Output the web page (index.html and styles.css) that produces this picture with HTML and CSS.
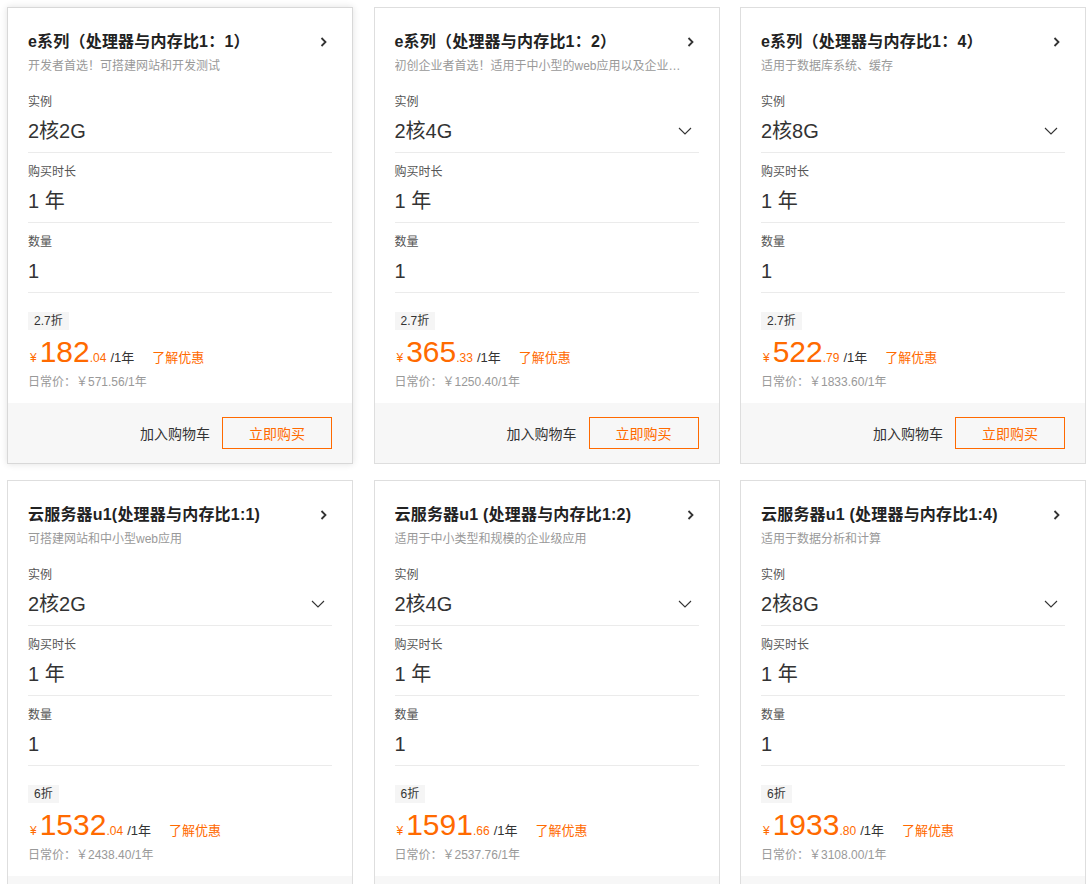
FILE: index.html
```html
<!DOCTYPE html>
<html lang="zh-CN">
<head>
<meta charset="utf-8">
<title>云服务器</title>
<link rel="stylesheet" href="styles.css">
</head>
<body>
<div class="grid">

  <div class="card card-hover">
    <div class="body">
      <div class="title-row"><span class="title">e系列（处理器与内存比1：1）</span><svg class="arrow-r" width="8" height="10" viewBox="0 0 8 10"><polyline points="1.5,1 5.5,5 1.5,9" fill="none" stroke="#333" stroke-width="1.8"/></svg></div>
      <div class="sub">开发者首选！可搭建网站和开发测试</div>
      <div class="field first"><div class="label">实例</div><div class="value"><span>2核2G</span></div></div>
      <div class="field"><div class="label">购买时长</div><div class="value"><span>1 年</span></div></div>
      <div class="field"><div class="label">数量</div><div class="value"><span>1</span></div></div>
      <div class="price-area">
        <div class="badge-row"><span class="badge">2.7折</span></div>
        <div class="price"><span class="yen">¥</span><span class="big">182</span><span class="dec">.04</span><span class="unit">/1年</span><span class="promo">了解优惠</span></div>
        <div class="orig">日常价：￥571.56/1年</div>
      </div>
    </div>
    <div class="footer"><span class="cart">加入购物车</span><span class="buy">立即购买</span></div>
  </div>

  <div class="card">
    <div class="body">
      <div class="title-row"><span class="title">e系列（处理器与内存比1：2）</span><svg class="arrow-r" width="8" height="10" viewBox="0 0 8 10"><polyline points="1.5,1 5.5,5 1.5,9" fill="none" stroke="#333" stroke-width="1.8"/></svg></div>
      <div class="sub narrow">初创企业者首选！适用于中小型的web应用以及企业级应用</div>
      <div class="field first"><div class="label">实例</div><div class="value"><span>2核4G</span><svg class="arrow-d" width="14" height="8" viewBox="0 0 14 8"><polyline points="1,1 7,7 13,1" fill="none" stroke="#333" stroke-width="1.1"/></svg></div></div>
      <div class="field"><div class="label">购买时长</div><div class="value"><span>1 年</span></div></div>
      <div class="field"><div class="label">数量</div><div class="value"><span>1</span></div></div>
      <div class="price-area">
        <div class="badge-row"><span class="badge">2.7折</span></div>
        <div class="price"><span class="yen">¥</span><span class="big">365</span><span class="dec">.33</span><span class="unit">/1年</span><span class="promo">了解优惠</span></div>
        <div class="orig">日常价：￥1250.40/1年</div>
      </div>
    </div>
    <div class="footer"><span class="cart">加入购物车</span><span class="buy">立即购买</span></div>
  </div>

  <div class="card">
    <div class="body">
      <div class="title-row"><span class="title">e系列（处理器与内存比1：4）</span><svg class="arrow-r" width="8" height="10" viewBox="0 0 8 10"><polyline points="1.5,1 5.5,5 1.5,9" fill="none" stroke="#333" stroke-width="1.8"/></svg></div>
      <div class="sub">适用于数据库系统、缓存</div>
      <div class="field first"><div class="label">实例</div><div class="value"><span>2核8G</span><svg class="arrow-d" width="14" height="8" viewBox="0 0 14 8"><polyline points="1,1 7,7 13,1" fill="none" stroke="#333" stroke-width="1.1"/></svg></div></div>
      <div class="field"><div class="label">购买时长</div><div class="value"><span>1 年</span></div></div>
      <div class="field"><div class="label">数量</div><div class="value"><span>1</span></div></div>
      <div class="price-area">
        <div class="badge-row"><span class="badge">2.7折</span></div>
        <div class="price"><span class="yen">¥</span><span class="big">522</span><span class="dec">.79</span><span class="unit">/1年</span><span class="promo">了解优惠</span></div>
        <div class="orig">日常价：￥1833.60/1年</div>
      </div>
    </div>
    <div class="footer"><span class="cart">加入购物车</span><span class="buy">立即购买</span></div>
  </div>

  <div class="card">
    <div class="body">
      <div class="title-row"><span class="title">云服务器u1(处理器与内存比1:1)</span><svg class="arrow-r" width="8" height="10" viewBox="0 0 8 10"><polyline points="1.5,1 5.5,5 1.5,9" fill="none" stroke="#333" stroke-width="1.8"/></svg></div>
      <div class="sub">可搭建网站和中小型web应用</div>
      <div class="field first"><div class="label">实例</div><div class="value"><span>2核2G</span><svg class="arrow-d" width="14" height="8" viewBox="0 0 14 8"><polyline points="1,1 7,7 13,1" fill="none" stroke="#333" stroke-width="1.1"/></svg></div></div>
      <div class="field"><div class="label">购买时长</div><div class="value"><span>1 年</span></div></div>
      <div class="field"><div class="label">数量</div><div class="value"><span>1</span></div></div>
      <div class="price-area">
        <div class="badge-row"><span class="badge">6折</span></div>
        <div class="price"><span class="yen">¥</span><span class="big">1532</span><span class="dec">.04</span><span class="unit">/1年</span><span class="promo">了解优惠</span></div>
        <div class="orig">日常价：￥2438.40/1年</div>
      </div>
    </div>
    <div class="footer"><span class="cart">加入购物车</span><span class="buy">立即购买</span></div>
  </div>

  <div class="card">
    <div class="body">
      <div class="title-row"><span class="title">云服务器u1 (处理器与内存比1:2)</span><svg class="arrow-r" width="8" height="10" viewBox="0 0 8 10"><polyline points="1.5,1 5.5,5 1.5,9" fill="none" stroke="#333" stroke-width="1.8"/></svg></div>
      <div class="sub">适用于中小类型和规模的企业级应用</div>
      <div class="field first"><div class="label">实例</div><div class="value"><span>2核4G</span><svg class="arrow-d" width="14" height="8" viewBox="0 0 14 8"><polyline points="1,1 7,7 13,1" fill="none" stroke="#333" stroke-width="1.1"/></svg></div></div>
      <div class="field"><div class="label">购买时长</div><div class="value"><span>1 年</span></div></div>
      <div class="field"><div class="label">数量</div><div class="value"><span>1</span></div></div>
      <div class="price-area">
        <div class="badge-row"><span class="badge">6折</span></div>
        <div class="price"><span class="yen">¥</span><span class="big">1591</span><span class="dec">.66</span><span class="unit">/1年</span><span class="promo">了解优惠</span></div>
        <div class="orig">日常价：￥2537.76/1年</div>
      </div>
    </div>
    <div class="footer"><span class="cart">加入购物车</span><span class="buy">立即购买</span></div>
  </div>

  <div class="card">
    <div class="body">
      <div class="title-row"><span class="title">云服务器u1 (处理器与内存比1:4)</span><svg class="arrow-r" width="8" height="10" viewBox="0 0 8 10"><polyline points="1.5,1 5.5,5 1.5,9" fill="none" stroke="#333" stroke-width="1.8"/></svg></div>
      <div class="sub">适用于数据分析和计算</div>
      <div class="field first"><div class="label">实例</div><div class="value"><span>2核8G</span><svg class="arrow-d" width="14" height="8" viewBox="0 0 14 8"><polyline points="1,1 7,7 13,1" fill="none" stroke="#333" stroke-width="1.1"/></svg></div></div>
      <div class="field"><div class="label">购买时长</div><div class="value"><span>1 年</span></div></div>
      <div class="field"><div class="label">数量</div><div class="value"><span>1</span></div></div>
      <div class="price-area">
        <div class="badge-row"><span class="badge">6折</span></div>
        <div class="price"><span class="yen">¥</span><span class="big">1933</span><span class="dec">.80</span><span class="unit">/1年</span><span class="promo">了解优惠</span></div>
        <div class="orig">日常价：￥3108.00/1年</div>
      </div>
    </div>
    <div class="footer"><span class="cart">加入购物车</span><span class="buy">立即购买</span></div>
  </div>

</div>
</body>
</html>
```

FILE: styles.css
```css
html, body {
  margin: 0;
  background: #fff;
}
body {
  padding: 7px 0 0 7px;
  font-family: "Liberation Sans", Arial, "Noto Sans CJK SC", sans-serif;
  color: #333;
}
.grid {
  display: grid;
  grid-template-columns: repeat(3, 346px);
  column-gap: 20.5px;
  row-gap: 16px;
}
.card {
  border: 1px solid #dedede;
  background: #fff;
}
.card-hover {
  border-color: #d8d8d8;
  box-shadow: 0 0 7px rgba(0, 0, 0, 0.12);
}
.body {
  padding: 23px 20px 0 20px;
}
.title-row {
  display: flex;
  justify-content: space-between;
  align-items: center;
  height: 22px;
}
.title {
  font-size: 16px;
  font-weight: bold;
  line-height: 22px;
  color: #222;
  white-space: nowrap;
  letter-spacing: 0.2px;
}
.arrow-r {
  margin-right: 4px;
  display: block;
}
.sub {
  margin-top: 3px;
  font-size: 12px;
  line-height: 20px;
  color: #999;
  white-space: nowrap;
  overflow: hidden;
  text-overflow: ellipsis;
  padding-right: 4px;
}
.sub.narrow {
  padding-right: 10px;
}
.field {
  padding: 10px 0 7px;
  border-bottom: 1px solid #ebebeb;
}
.field.first {
  margin-top: 7px;
}
.label {
  font-size: 12px;
  line-height: 18px;
  color: #555;
}
.value {
  margin-top: 6px;
  font-size: 20px;
  line-height: 28px;
  color: #333;
  display: flex;
  justify-content: space-between;
  align-items: center;
  white-space: pre;
}
.arrow-d {
  display: block;
  margin-right: 7px;
}
.price-area {
  padding-top: 19px;
}
.badge-row {
  display: flex;
  height: 18px;
}
.badge {
  background: #f5f5f5;
  font-size: 12px;
  line-height: 18px;
  padding: 0 6px;
  color: #333;
}
.price {
  margin-top: 4px;
  height: 36px;
  line-height: 36px;
  display: flex;
  align-items: baseline;
  color: #ff6a00;
}
.yen {
  font-size: 12px;
  margin-left: 2px;
  margin-right: 3px;
}
.big {
  font-size: 30px;
}
.dec {
  font-size: 12px;
}
.unit {
  font-size: 13px;
  color: #333;
  margin-left: 4px;
}
.promo {
  font-size: 13px;
  margin-left: 18px;
  color: #ff6a00;
}
.orig {
  margin-top: 3px;
  font-size: 12px;
  line-height: 18px;
  color: #999;
}
.footer {
  margin-top: 12px;
  height: 60px;
  background: #f7f7f7;
  display: flex;
  justify-content: flex-end;
  align-items: center;
  gap: 12px;
  padding-right: 20px;
}
.cart {
  font-size: 14px;
  color: #333;
}
.buy {
  box-sizing: border-box;
  width: 110px;
  height: 32px;
  border: 1px solid #ff6a00;
  color: #ff6a00;
  font-size: 14px;
  display: flex;
  align-items: center;
  justify-content: center;
}
```
